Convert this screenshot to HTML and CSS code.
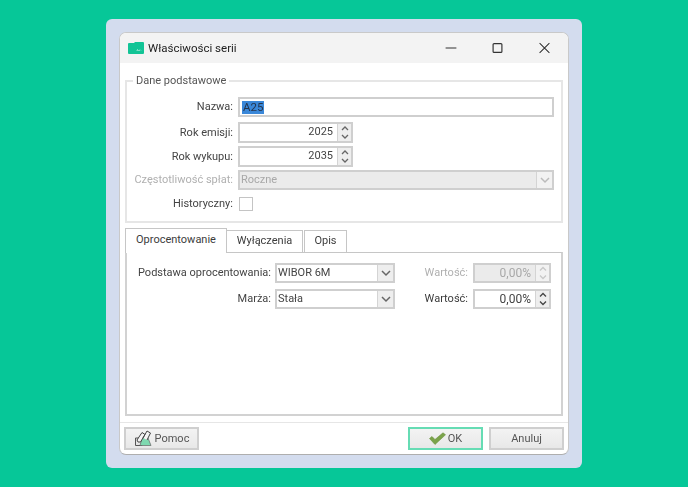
FILE: index.html
```html
<!DOCTYPE html>
<html lang="pl">
<head>
<meta charset="utf-8">
<title>Właściwości serii</title>
<link rel="stylesheet" href="styles.css">
</head>
<body>
<div class="card">
  <div class="dialog">
    <header class="titlebar">
      <svg class="app-icon" width="16" height="12" viewBox="0 0 16 12"><path d="M0 2 Q0 1 1 1 H6 L7 0 H15 Q16 0 16 1 V11 Q16 12 15 12 H1 Q0 12 0 11Z" fill="#12c496"/><path d="M9 8.500h3M10 7l-1.500 1.500M12 7.500l1 1" stroke="#9ae6d0" stroke-width=".8" fill="none"/></svg>
      <span class="title">Właściwości serii</span>
      <div class="win-buttons">
        <svg class="win-btn" width="47" height="14" viewBox="0 0 48 14"><path d="M19 7h11" stroke="#333" stroke-width="1.100" fill="none"/></svg>
        <svg class="win-btn" width="47" height="14" viewBox="0 0 48 14"><rect x="19.500" y="2.500" width="9" height="9" rx="1" stroke="#333" stroke-width="1.200" fill="none"/></svg>
        <svg class="win-btn" width="47" height="14" viewBox="0 0 48 14"><path d="M19 2l10 10M29 2L19 12" stroke="#333" stroke-width="1.100" fill="none"/></svg>
      </div>
    </header>
    <main class="body">
      <fieldset class="group">
        <legend class="legend">Dane podstawowe</legend>
        <div class="form-row row-name">
          <label class="label">Nazwa:</label>
          <div class="input wide"><span class="selected">A25</span></div>
        </div>
        <div class="form-row">
          <label class="label">Rok emisji:</label>
          <div class="spinner year">
            <span class="spin-value">2025</span>
            <span class="spin-buttons"><svg width="10" height="17" viewBox="0 0 10 17"><path d="M2 6l3-3 3 3M2 11l3 3 3-3" stroke="#666" stroke-width="1.300" fill="none"/></svg></span>
          </div>
        </div>
        <div class="form-row">
          <label class="label">Rok wykupu:</label>
          <div class="spinner year">
            <span class="spin-value">2035</span>
            <span class="spin-buttons"><svg width="10" height="17" viewBox="0 0 10 17"><path d="M2 6l3-3 3 3M2 11l3 3 3-3" stroke="#666" stroke-width="1.300" fill="none"/></svg></span>
          </div>
        </div>
        <div class="form-row row-freq">
          <label class="label muted">Częstotliwość spłat:</label>
          <div class="select wide disabled">
            <span class="select-value">Roczne</span>
            <span class="select-arrow"><svg width="12" height="8" viewBox="0 0 12 8"><path d="M2 2l4 4 4-4" stroke="#bbb" stroke-width="1.500" fill="none"/></svg></span>
          </div>
        </div>
        <div class="form-row">
          <label class="label">Historyczny:</label>
          <span class="checkbox"></span>
        </div>
      </fieldset>

      <nav class="tabs">
        <span class="tab active">Oprocentowanie</span>
        <span class="tab t2">Wyłączenia</span>
        <span class="tab t3">Opis</span>
      </nav>
      <section class="pane">
        <div class="pane-row">
          <label class="pane-label">Podstawa oprocentowania:</label>
          <div class="select medium">
            <span class="select-value">WIBOR 6M</span>
            <span class="select-arrow"><svg width="12" height="8" viewBox="0 0 12 8"><path d="M2 2l4 4 4-4" stroke="#666" stroke-width="1.500" fill="none"/></svg></span>
          </div>
          <label class="value-label muted">Wartość:</label>
          <div class="spinner pct disabled">
            <span class="spin-value">0,00%</span>
            <span class="spin-buttons"><svg width="10" height="16" viewBox="0 0 10 16"><path d="M2 5.500l3-3 3 3M2 10.500l3 3 3-3" stroke="#c8c8c8" stroke-width="1.300" fill="none"/></svg></span>
          </div>
        </div>
        <div class="pane-row">
          <label class="pane-label">Marża:</label>
          <div class="select medium">
            <span class="select-value">Stała</span>
            <span class="select-arrow"><svg width="12" height="8" viewBox="0 0 12 8"><path d="M2 2l4 4 4-4" stroke="#666" stroke-width="1.500" fill="none"/></svg></span>
          </div>
          <label class="value-label">Wartość:</label>
          <div class="spinner pct">
            <span class="spin-value">0,00%</span>
            <span class="spin-buttons"><svg width="10" height="16" viewBox="0 0 10 16"><path d="M2 5.500l3-3 3 3M2 10.500l3 3 3-3" stroke="#444" stroke-width="1.300" fill="none"/></svg></span>
          </div>
        </div>
      </section>
    </main>
    <footer class="footer">
      <button class="btn">
        <svg class="help-icon" width="19" height="17" viewBox="0 0 19 17"><path d="M1.500 8H8v7.500H1.500z" fill="#e4e4e4" stroke="#555"/><path d="M6 15.500h11L14 8H8z" fill="#7fd9b0" stroke="#666" stroke-width=".7"/><path d="M3 10L8 2.500l3 2-4.500 7.500H4zM9 8l4-7 3.500 2L13 10" fill="#f4f4f4" stroke="#444"/></svg>
        Pomoc
      </button>
      <div class="footer-right">
        <button class="btn ok">
          <svg width="17" height="13" viewBox="0 0 17 13"><path d="M.500 6.500L3 4.500l3 3L14 .800l2.500 2L6 12.500z" fill="#7ba34a" stroke="#6c9440" stroke-width=".6"/></svg>
          OK
        </button>
        <button class="btn">Anuluj</button>
      </div>
    </footer>
  </div>
</div>
</body>
</html>
```

FILE: styles.css
```css
* { box-sizing: border-box; }
html, body { margin: 0; height: 100%; }
body {
  width: 688px;
  height: 487px;
  background: #06c798;
  font-family: Roboto, "Noto Sans", sans-serif;
  font-size: 11px;
  color: #3c3c3c;
  padding-top: 19px;
  overflow: hidden;
}
.card {
  width: 476px;
  height: 449px;
  margin-left: 106px;
  padding: 13px;
  background: #d3dcee;
  border-radius: 6px;
}
.dialog {
  width: 450px;
  height: 423px;
  background: #fff;
  border: 1px solid #c9c9c9;
  border-bottom-color: #aeaeae;
  border-radius: 7px;
  overflow: hidden;
  display: flex;
  flex-direction: column;
  filter: blur(0.35px);
}
.titlebar {
  height: 30px;
  flex: none;
  background: #f3f3f3;
  display: flex;
  align-items: center;
  padding: 0 0 1px 8px;
}
.app-icon { flex: none; margin-right: 4px; }
.title { font-size: 11.500px; color: #222; }
.win-buttons { margin-left: auto; display: flex; }
.win-btn { display: block; }
.body { flex: 1; padding: 12px 5px 0 5px; display: flex; flex-direction: column; }
.group {
  margin: 0;
  padding: 10px 7px 0 0;
  height: 148px;
  border: 2px solid #e6e6e6;
  flex: none;
}
.legend { margin-left: 6px; padding: 0 3px 1px; color: #555; font-size: 11px; line-height: 11px; }
.form-row { display: flex; align-items: center; min-height: 20px; margin-bottom: 3px; }
.row-name { margin-bottom: 5px; }
.row-freq { margin-bottom: 4px; }
.label { width: 106px; flex: none; text-align: right; margin-right: 5px; color: #444; white-space: nowrap; padding-bottom: 1px; }
.muted, .label.muted, .value-label.muted { color: #b0b0b0; }
.input {
  height: 20px;
  border: 2px solid #cfcfcf;
  background: #fff;
  padding-left: 2px;
  display: flex;
  align-items: center;
}
.wide { width: 316px; }
.selected { background: #3a87d8; color: #24344c; font-size: 11.500px; line-height: 13px; padding: 0 1px; }
.spinner {
  display: flex;
  align-items: stretch;
  height: 21px;
  border: 2px solid #cfcfcf;
  background: #fff;
}
.year { width: 115px; }
.pct { width: 78px; height: 20px; }
.pct .spin-value { font-size: 12px; }
.spin-value { flex: 1; text-align: right; padding-right: 4px; line-height: 16px; color: #444; }
.spin-buttons {
  width: 14px;
  flex: none;
  background: #eee;
  border-left: 1px solid #d4d4d4;
  display: flex;
  align-items: center;
  justify-content: center;
}
.spinner.disabled { background: #ebebeb; }
.spinner.disabled .spin-value { color: #a8a8a8; }
.spinner.disabled .spin-buttons { background: #f2f2f2; }
.select {
  display: flex;
  align-items: stretch;
  height: 20px;
  border: 2px solid #cfcfcf;
  background: #fff;
}
.select-value { flex: 1; padding-left: 1px; line-height: 15px; color: #444; }
.select-arrow {
  width: 16px;
  flex: none;
  background: #eee;
  border-left: 1px solid #d4d4d4;
  display: flex;
  align-items: center;
  justify-content: center;
}
.select.disabled { background: #ebebeb; }
.select.disabled .select-value { color: #a8a8a8; }
.select.disabled .select-arrow { background: #f2f2f2; }
.medium { width: 120px; flex: none; }
.checkbox { width: 14px; height: 14px; margin-left: 1px; border: 1px solid #c4c4c4; background: #fff; }
.tabs { display: flex; align-items: flex-end; margin-top: 5px; height: 24px; flex: none; }
.tab {
  border: 1px solid #c6c6c6;
  border-bottom: none;
  background: #fff;
  height: 22px;
  text-align: center;
  line-height: 20px;
  margin-left: -1px;
}
.tab.active { width: 102px; height: 25px; margin-left: 0; line-height: 21px; margin-bottom: -1px; position: relative; z-index: 1; }
.t2 { width: 77px; }
.t3 { width: 43px; margin-left: 1px; }
.pane {
  flex: none;
  height: 164px;
  border: 2px solid #d2d2d2;
  border-top: 1px solid #c6c6c6;
  padding-top: 10px;
}
.pane-row { display: flex; align-items: center; height: 20px; margin-bottom: 6px; }
.pane-label { width: 144px; flex: none; text-align: right; margin-right: 4px; color: #444; white-space: nowrap; padding-bottom: 1px; }
.value-label { width: 73px; flex: none; text-align: right; margin-right: 5px; padding-bottom: 1px; }
.footer {
  flex: 1;
  margin-top: 6px;
  border-top: 1px solid #e6e6e6;
  display: flex;
  justify-content: space-between;
  padding: 4px 4px 0 4px;
}
.footer-right { display: flex; gap: 6px; }
.btn {
  width: 75px;
  height: 23px;
  border: 2px solid #cfcfcf;
  background: linear-gradient(#f3f3f3, #e8e8e8);
  font: inherit;
  color: #555;
  padding: 0;
  display: flex;
  align-items: center;
  justify-content: center;
  gap: 2px;
}
.help-icon { flex: none; }
.btn.ok { border-color: #66dcb4; }
```
